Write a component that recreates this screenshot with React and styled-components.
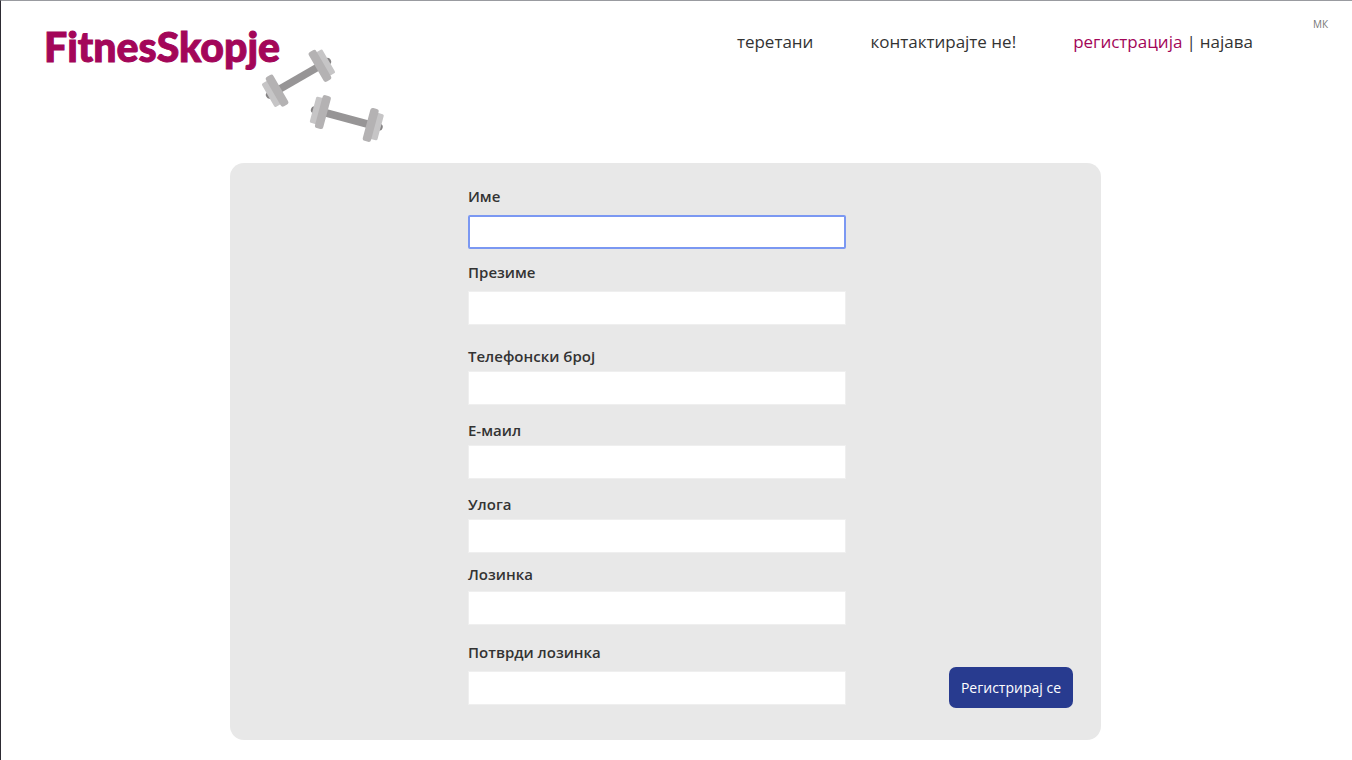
import React from "react";
import styled, { createGlobalStyle } from "styled-components";

const GlobalStyle = createGlobalStyle`
  * { box-sizing: border-box; }
  body {
    margin: 0;
    background: #fff;
    color: #333;
    font-family: "Open Sans", "Noto Sans", sans-serif;
  }
`;

const Page = styled.div`
  min-height: 100vh;
  border-top: 1px solid #999ba0;
  border-left: 1px solid #2d2b33;
`;

const Header = styled.header`
  display: flex;
  justify-content: space-between;
  align-items: flex-start;
  min-height: 162px;
  padding: 16px 24px 0 43px;
`;

const Brand = styled.a`
  position: relative;
  padding-top: 5px;
  color: #a30659;
  font-family: "Berlin Sans FB Demi", "Berlin Sans FB", Lato, sans-serif;
  font-size: 41px;
  font-weight: 900;
  line-height: 50px;
  text-decoration: none;
  -webkit-text-stroke: 1px #a30659;
`;

const Dumbbells = styled.svg`
  position: absolute;
  top: 29px;
  left: 214px;
  width: 130px;
  height: 100px;
`;

const HeaderRight = styled.div`
  display: flex;
  align-items: flex-start;
  gap: 60px;
`;

const Nav = styled.nav`
  display: flex;
  gap: 57px;
  padding-top: 13px;
  font-size: 17px;
  line-height: 24px;
`;

const Account = styled.div`
  display: flex;
  gap: 4px;
`;

const NavLink = styled.a`
  color: ${(p) => (p.$current ? "#a30659" : "#333")};
  text-decoration: none;
  white-space: nowrap;
`;

const Language = styled.button`
  padding: 0;
  border: 0;
  background: none;
  color: #777;
  font-family: inherit;
  font-size: 10px;
  line-height: 14px;
`;

const Main = styled.main`
  display: grid;
  grid-template-columns: 229fr 871fr 251fr;
  padding-bottom: 20px;
`;

const Panel = styled.form`
  grid-column: 2;
  display: grid;
  grid-template-columns: 238fr 378fr 255fr;
  padding: 24px 0 32px;
  border-radius: 14px;
  background: #e8e8e8;
`;

const Fields = styled.div`
  grid-column: 2;
  padding-bottom: 3px;
`;

const Field = styled.div`
  display: flex;
  flex-direction: column;
  gap: ${(p) => p.$gap}px;
  margin-bottom: ${(p) => p.$after}px;
`;

const Label = styled.label`
  font-size: 15px;
  font-weight: 600;
  line-height: 18px;
`;

const Input = styled.input`
  width: 100%;
  height: 34px;
  padding: 0 8px;
  border: ${(p) => (p.$active ? "2px solid #7b98f2" : "1px solid #efefef")};
  border-radius: ${(p) => (p.$active ? 2 : 0)}px;
  outline: none;
  background: #fff;
  font: inherit;
  font-size: 15px;
`;

const Actions = styled.div`
  display: flex;
  align-items: flex-end;
  justify-content: flex-end;
  padding-right: 28px;
`;

const Submit = styled.button`
  height: 41px;
  padding: 0 12px;
  border: 0;
  border-radius: 7px;
  background: #283b8f;
  color: #fff;
  font-family: inherit;
  font-size: 14px;
  white-space: nowrap;
`;

const fields = [
  { id: "first-name", label: "Име", type: "text", gap: 10, after: 14, active: true },
  { id: "last-name", label: "Презиме", type: "text", gap: 10, after: 22 },
  { id: "phone", label: "Телефонски број", type: "tel", gap: 6, after: 16 },
  { id: "email", label: "Е-маил", type: "email", gap: 6, after: 16 },
  { id: "role", label: "Улога", type: "text", gap: 6, after: 12 },
  { id: "password", label: "Лозинка", type: "password", gap: 8, after: 18 },
  { id: "confirm", label: "Потврди лозинка", type: "password", gap: 10, after: 0 },
];

function Dumbbell({ transform }) {
  return (
    <g transform={transform}>
      <circle cx="-33.5" cy="0" r="3.6" fill="#858384" />
      <circle cx="33.5" cy="0" r="3.6" fill="#858384" />
      <rect x="-25" y="-3.8" width="50" height="7.6" fill="#979596" />
      <rect x="-35" y="-13.5" width="8" height="27" rx="1.5" fill="#c6c5c6" />
      <rect x="27" y="-13.5" width="8" height="27" rx="1.5" fill="#c6c5c6" />
      <rect x="-29" y="-17" width="8.5" height="34" rx="2.5" fill="#b4b2b3" />
      <rect x="20.5" y="-17" width="8.5" height="34" rx="2.5" fill="#b4b2b3" />
    </g>
  );
}

export default function App() {
  return (
    <>
      <GlobalStyle />
      <Page>
        <Header>
          <Brand href="#">
            FitnesSkopje
            <Dumbbells viewBox="0 0 130 100" aria-hidden="true">
              <Dumbbell transform="translate(40.5 32.3) rotate(-30)" />
              <Dumbbell transform="translate(88.8 72.5) rotate(15)" />
            </Dumbbells>
          </Brand>
          <HeaderRight>
            <Nav>
              <NavLink href="#gyms">теретани</NavLink>
              <NavLink href="#contact">контактирајте не!</NavLink>
              <Account>
                <NavLink href="#register" $current>регистрација</NavLink>
                <span>|</span>
                <NavLink href="#login">најава</NavLink>
              </Account>
            </Nav>
            <Language type="button">МК</Language>
          </HeaderRight>
        </Header>
        <Main>
          <Panel>
            <Fields>
              {fields.map((f) => (
                <Field key={f.id} $gap={f.gap} $after={f.after}>
                  <Label htmlFor={f.id}>{f.label}</Label>
                  <Input id={f.id} type={f.type} $active={f.active} />
                </Field>
              ))}
            </Fields>
            <Actions>
              <Submit type="submit">Регистрирај се</Submit>
            </Actions>
          </Panel>
        </Main>
      </Page>
    </>
  );
}
